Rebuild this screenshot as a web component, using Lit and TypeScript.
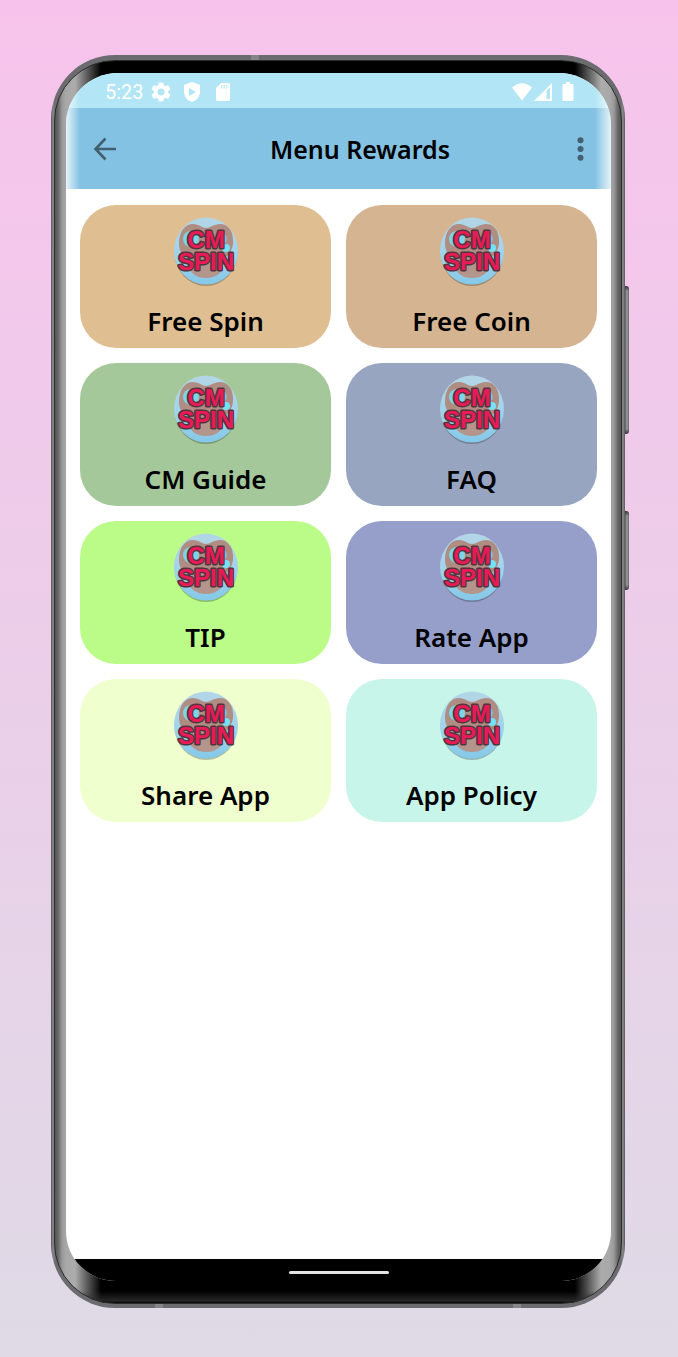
import { LitElement, html, css, svg } from "lit";
import { customElement, property } from "lit/decorators.js";

interface MenuItem {
  label: string;
  tone: string;
}

const ITEMS: MenuItem[] = [
  { label: "Free Spin", tone: "sand" },
  { label: "Free Coin", tone: "tan" },
  { label: "CM Guide", tone: "sage" },
  { label: "FAQ", tone: "steel" },
  { label: "TIP", tone: "lime" },
  { label: "Rate App", tone: "indigo" },
  { label: "Share App", tone: "cream" },
  { label: "App Policy", tone: "mint" },
];

@customElement("spin-logo")
export class SpinLogo extends LitElement {
  static styles = css`
    :host {
      display: block;
      width: 64px;
      height: 70px;
    }
    svg {
      display: block;
      overflow: visible;
    }
    .word {
      font-family: "Liberation Sans", sans-serif;
      font-weight: 700;
      font-size: 24px;
      text-anchor: middle;
      fill: #ea1a56;
      stroke: #50353f;
      stroke-width: 3px;
      stroke-linejoin: round;
      paint-order: stroke;
    }
  `;

  render() {
    return html`<svg width="64" height="70" viewBox="0 0 64 70" aria-hidden="true">
      ${svg`
        <defs>
          <linearGradient id="sky" x1="0" y1="0" x2="0" y2="1">
            <stop offset="0" stop-color="#b3d6e6" />
            <stop offset="0.6" stop-color="#9fd3ec" />
            <stop offset="1" stop-color="#84c8e8" />
          </linearGradient>
          <clipPath id="disc"><ellipse cx="32" cy="34" rx="32" ry="33.500" /></clipPath>
        </defs>
        <ellipse cx="32" cy="35.500" rx="31.500" ry="33.500" fill="#000" opacity="0.25" />
        <ellipse cx="32" cy="34" rx="32" ry="33.500" fill="url(#sky)" />
        <g clip-path="url(#disc)">
          <path d="M5 27 C5 14 11 7 19 7 C25 7 28 11 32 11 C36 11 40 7 46 7 C54 7 60 14 59 27 C58 35 53 40 48 42 L14 42 C8 38 5 34 5 27 Z" fill="#b08d82" />
          <circle cx="17" cy="22" r="8" fill="#7dd5e8" />
          <circle cx="47" cy="22" r="6" fill="#8bbccb" />
          <circle cx="52" cy="31" r="4" fill="#74e3f5" />
          <circle cx="27" cy="42" r="5" fill="#7fdcec" />
          <ellipse cx="32" cy="49" rx="17" ry="12" fill="#b3958c" />
        </g>
        <text class="word"><tspan x="32" y="31">CM</tspan><tspan x="32" y="53">SPIN</tspan></text>
      `}
    </svg>`;
  }
}

@customElement("menu-card")
export class MenuCard extends LitElement {
  @property() label = "";
  @property() tone = "sand";

  static styles = css`
    :host {
      display: block;
    }
    .card {
      display: flex;
      flex-direction: column;
      align-items: center;
      gap: 14px;
      width: 100%;
      height: 143px;
      padding: 12px 8px 0;
      border: 0;
      border-radius: 36px;
      color: #000;
      font: 600 26px/40px "Noto Sans", "Open Sans", sans-serif;
      box-sizing: border-box;
      cursor: pointer;
    }
    .sand { background: #dfbf91; }
    .tan { background: #d5b492; }
    .sage { background: #a4c899; }
    .steel { background: #98a5c0; }
    .lime { background: #bbfb88; }
    .indigo { background: #969fca; }
    .cream { background: #f0ffce; }
    .mint { background: #c7f5ea; }
  `;

  render() {
    return html`<button class="card ${this.tone}" type="button">
      <spin-logo></spin-logo>
      <span>${this.label}</span>
    </button>`;
  }
}

@customElement("app-root")
export class AppRoot extends LitElement {
  static styles = css`
    :host {
      display: flex;
      box-sizing: border-box;
      min-height: 100vh;
      padding: 55px 53px 49px 51px;
      background: linear-gradient(#f7c3ec, #dfdae6);
      font-family: "Noto Sans", "Open Sans", sans-serif;
    }
    .phone {
      position: relative;
      flex: 1;
      display: flex;
      padding: 5px 3px 4px;
      border-radius: 64px;
      background: linear-gradient(90deg, #56565a, #8a8a8c 2px, #6c6c70 4px, #6c6c70 calc(100% - 4px), #8a8a8c calc(100% - 2px), #56565a);
    }
    .seam {
      position: absolute;
      width: 8px;
      height: 5px;
      background: #85858a;
    }
    .seam-top { top: 0; left: 200px; }
    .seam-left { bottom: 0; left: 104px; height: 4px; }
    .seam-right { bottom: 0; right: 104px; height: 4px; }
    .key {
      position: absolute;
      left: 100%;
      width: 4px;
      border-radius: 0 3px 3px 0;
      background:
        linear-gradient(#333, transparent 5px, transparent calc(100% - 5px), #333),
        linear-gradient(90deg, #606062, #9b9b9e 2px, #6b6b6e);
    }
    .volume { top: 231px; height: 148px; }
    .power { top: 456px; height: 79px; }
    .bezel {
      flex: 1;
      display: flex;
      padding: 12px 10px 22px 11px;
      border: 1px solid #2c2c2c;
      border-radius: 61px;
      background:
        linear-gradient(transparent calc(100% - 12px), rgba(50, 50, 50, 0.8) calc(100% - 2px), #000),
        linear-gradient(90deg, #555, #666 3px, #999 7px, #a8a8a8 11px, #acacac 20px, #000 46px, #000 calc(100% - 46px), #acacac calc(100% - 20px), #a8a8a8 calc(100% - 11px), #999 calc(100% - 7px), #666 calc(100% - 3px), #555);
    }
    .screen {
      flex: 1;
      display: flex;
      flex-direction: column;
      overflow: hidden;
      border-radius: 52px 52px 50px 50px;
      background: #fff;
    }
    .top {
      position: relative;
    }
    .top::after {
      content: "";
      position: absolute;
      inset: 0;
      pointer-events: none;
      background: linear-gradient(90deg, rgba(255, 255, 255, 0.8), transparent 14px, transparent calc(100% - 16px), rgba(255, 255, 255, 0.8));
    }
    .status {
      display: flex;
      align-items: center;
      height: 35px;
      padding: 2px 37px 0 39px;
      box-sizing: border-box;
      background: #b2e5f5;
      color: #fff;
      font: 400 20px/32px Roboto, sans-serif;
    }
    .status svg {
      display: block;
      fill: #fff;
    }
    .notes {
      display: flex;
      align-items: center;
      gap: 11px;
      flex: 1;
      padding-left: 7px;
    }
    .signals {
      display: flex;
      align-items: center;
    }
    .battery {
      margin-left: 9px;
    }
    .bar {
      display: flex;
      align-items: center;
      height: 81px;
      padding: 0 22px 0 27px;
      box-sizing: border-box;
      background: #84c2e3;
    }
    .title {
      flex: 1;
      margin: 0 0 0 32px;
      color: #000;
      font-size: 25px;
      line-height: 40px;
      font-weight: 600;
      text-align: center;
    }
    .tool {
      display: flex;
      justify-content: center;
      padding: 0;
      border: 0;
      background: none;
      color: #42606f;
      cursor: pointer;
    }
    .grid {
      flex: 1;
      display: grid;
      grid-template-columns: 1fr 1fr;
      align-content: start;
      gap: 15px;
      padding: 16px 14px;
    }
    .home {
      display: flex;
      justify-content: center;
      height: 22px;
      padding-top: 12px;
      box-sizing: border-box;
      background: #000;
    }
    .pill {
      width: 100px;
      height: 3px;
      border-radius: 2px;
      background: #e4e4e4;
    }
  `;

  render() {
    return html`<div class="phone">
      <span class="seam seam-top"></span>
      <span class="seam seam-left"></span>
      <span class="seam seam-right"></span>
      <span class="key volume"></span>
      <span class="key power"></span>
      <div class="bezel">
        <div class="screen">
          <header class="top">
            <div class="status">
              <span>5:23</span>
              <div class="notes">
                <svg width="20" height="20" viewBox="2 2 20 20" aria-hidden="true">
                  <path d="M19.140 12.940c.04-.3.06-.61.06-.94 0-.32-.02-.64-.07-.94l2.030-1.580a.49.49 0 0 0 .12-.61l-1.920-3.320a.488.488 0 0 0-.59-.22l-2.390.96c-.5-.38-1.030-.7-1.620-.94l-.36-2.540a.484.484 0 0 0-.48-.41h-3.840c-.24 0-.43.17-.47.41l-.36 2.540c-.59.24-1.130.57-1.620.94l-2.390-.96c-.22-.08-.47 0-.59.22L2.740 8.870c-.12.21-.08.47.12.61l2.030 1.580c-.05.3-.09.63-.09.94s.02.64.07.94l-2.030 1.580a.49.49 0 0 0-.12.61l1.920 3.320c.12.22.37.29.59.22l2.390-.96c.5.38 1.030.7 1.620.94l.36 2.540c.05.24.24.41.48.41h3.840c.24 0 .44-.17.47-.41l.36-2.540c.59-.24 1.130-.56 1.620-.94l2.390.96c.22.08.47 0 .59-.22l1.920-3.320c.12-.22.07-.47-.12-.61l-2.010-1.580zM12 15.600c-1.980 0-3.600-1.620-3.600-3.600s1.620-3.600 3.600-3.600 3.600 1.620 3.600 3.600-1.620 3.600-3.600 3.600z" />
                </svg>
                <svg width="20" height="20" viewBox="0 0 20 20" aria-hidden="true">
                  <path fill-rule="evenodd" d="M10 0 L18 3 V9 C18 14.500 15 18.500 10 20 C5 18.500 2 14.500 2 9 V3 Z M7 6 V14 L14 10 Z" />
                </svg>
                <svg width="20" height="20" viewBox="0 0 20 20" aria-hidden="true">
                  <path d="M8 1 H15.500 Q17 1 17 2.500 V17.500 Q17 19 15.500 19 H4.500 Q3 19 3 17.500 V6 Z" />
                  <path d="M8.700 3 V6.500 M11.300 3 V6.500 M13.900 3 V6.500" stroke="#b2e5f5" stroke-width="1.400" opacity="0.8" />
                </svg>
              </div>
              <div class="signals">
                <svg width="22" height="20" viewBox="0 0 22 20" aria-hidden="true">
                  <path d="M11 18.500 L1 5.500 Q11 -3 21 5.500 Z" />
                </svg>
                <svg width="20" height="20" viewBox="0 0 20 20" aria-hidden="true">
                  <path fill-rule="evenodd" d="M19 1 V19 H1 Z M13.500 8.800 L17 5.300 V17 H13.500 Z" />
                </svg>
                <svg class="battery" width="12" height="20" viewBox="0 0 12 20" aria-hidden="true">
                  <path d="M4 0 H8 V2 H10.500 Q11.500 2 11.500 3 V18 Q11.500 19 10.500 19 H1.500 Q0.500 19 0.500 18 V3 Q0.500 2 1.500 2 H4 Z" />
                </svg>
              </div>
            </div>
            <div class="bar">
              <button class="tool" type="button" aria-label="Back">
                <svg width="24" height="24" viewBox="0 0 24 24" fill="none" stroke="currentColor" stroke-width="2.600">
                  <path d="M12.500 1.500 L2.500 12 L12.500 22.500 M2.500 12 H23" />
                </svg>
              </button>
              <h1 class="title">Menu Rewards</h1>
              <button class="tool" type="button" aria-label="More options">
                <svg width="18" height="24" viewBox="0 0 18 24" fill="currentColor">
                  <circle cx="9.500" cy="3.300" r="3" />
                  <circle cx="9.500" cy="12" r="3" />
                  <circle cx="9.500" cy="20.700" r="3" />
                </svg>
              </button>
            </div>
          </header>
          <main class="grid">
            ${ITEMS.map((item) => html`<menu-card .label=${item.label} .tone=${item.tone}></menu-card>`)}
          </main>
          <footer class="home"><span class="pill"></span></footer>
        </div>
      </div>
    </div>`;
  }
}
